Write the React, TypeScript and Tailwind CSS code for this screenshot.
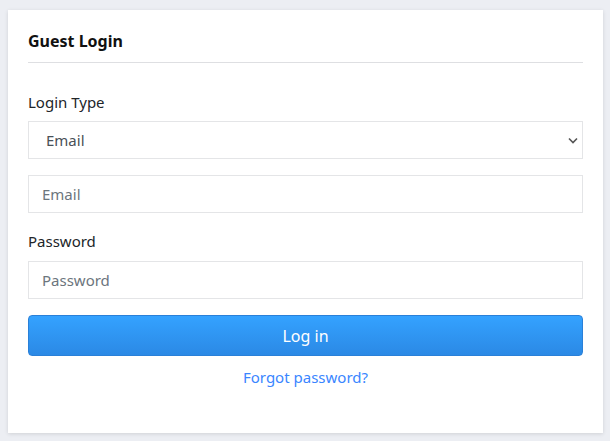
import React from "react";

export default function App() {
	return (
		<div className="min-h-screen bg-[#eceef3] pt-[10px] pl-[8px] pr-[7px] font-['Noto_Sans',sans-serif]">
			<div className="bg-white shadow-[0_1px_4px_rgba(0,0,0,0.12)] px-5 pt-[19px] pb-[45px]">
				<h2 className="text-[16px] leading-[24px] font-bold text-[#111] pb-[9px] border-b border-[#dedfe2]">
					Guest Login
				</h2>
				<form className="mt-[28px] flex flex-col">
					<label className="text-[15px] leading-[22px] text-[#212529] mb-[8px]">Login Type</label>
					<div className="relative">
						<select className="appearance-none w-full h-[38px] border border-[#e4e5e7] bg-white pl-[17px] text-[15px] text-[#495057] outline-none">
							<option>Email</option>
						</select>
						<svg
							className="absolute right-[5px] top-[16px] pointer-events-none"
							width="10"
							height="7"
							viewBox="0 0 10 7"
							fill="none"
							stroke="#555"
							strokeWidth="1.6"
						>
							<path d="M1 1.5l4 4 4-4" />
						</svg>
					</div>
					<input
						type="email"
						placeholder="Email"
						className="mt-[16px] w-full h-[38px] border border-[#e4e5e7] px-[13px] text-[15px] text-[#495057] placeholder-[#6c757d] outline-none"
					/>
					<label className="mt-[17px] text-[15px] leading-[22px] text-[#212529] mb-[9px]">Password</label>
					<input
						type="password"
						placeholder="Password"
						className="w-full h-[38px] border border-[#e4e5e7] px-[13px] text-[15px] text-[#495057] placeholder-[#6c757d] outline-none"
					/>
					<button
						type="button"
						className="mt-[16px] h-[41px] w-full rounded-[4px] border border-[#2a80d8] bg-gradient-to-b from-[#34a2ff] to-[#2b89e5] text-white text-[16px]"
					>
						Log in
					</button>
					<a href="#" className="mt-[10px] self-center text-[15px] leading-[22px] text-[#3a86ff]">
						Forgot password?
					</a>
				</form>
			</div>
		</div>
	);
}
